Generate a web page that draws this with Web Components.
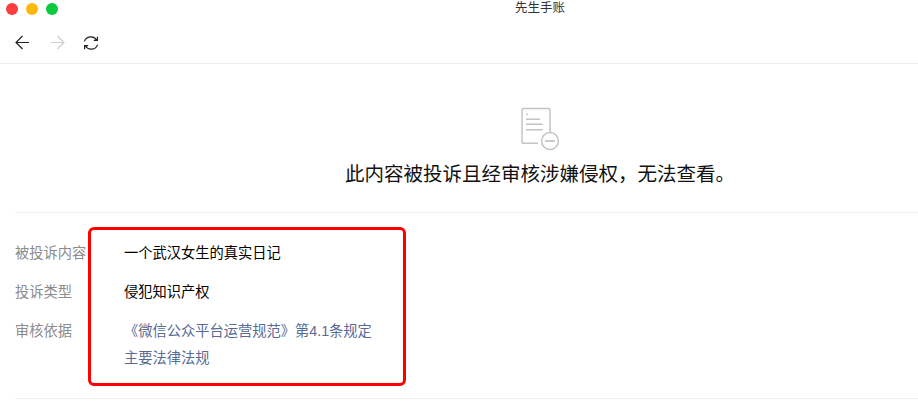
<!DOCTYPE html>
<html>
<head>
<meta charset="utf-8">
<style>
  html, body { margin: 0; padding: 0; background: #fff; }
  body { width: 918px; height: 410px; overflow: hidden; font-family: "Liberation Sans", "Noto Sans CJK SC", sans-serif; }
</style>
</head>
<body>
<app-window>
  <title-bar>先生手账</title-bar>
  <tool-bar></tool-bar>
  <notice-head>此内容被投诉且经审核涉嫌侵权，无法查看。</notice-head>
  <info-list>
    <info-row label="被投诉内容">一个武汉女生的真实日记</info-row>
    <info-row label="投诉类型">侵犯知识产权</info-row>
    <info-row label="审核依据" link>《微信公众平台运营规范》第4.1条规定</info-row>
    <info-row link tight>主要法律法规</info-row>
  </info-list>
  <mark-box></mark-box>
</app-window>

<script>
  class AppWindow extends HTMLElement {
    constructor() {
      super();
      const shadow = this.attachShadow({ mode: "open" });
      shadow.innerHTML = `
        <style>
          :host { display: block; position: relative; width: 918px; height: 410px; overflow: hidden; }
        </style>
        <slot></slot>`;
    }
  }

  class TitleBar extends HTMLElement {
    constructor() {
      super();
      const shadow = this.attachShadow({ mode: "open" });
      shadow.innerHTML = `
        <style>
          :host { display: flex; align-items: center; height: 17px; padding-left: 6px; position: relative; }
          .lights { display: flex; gap: 8px; }
          .lights i { width: 12px; height: 12px; border-radius: 50%; display: block; }
          .title { flex: 1; padding-left: 457px; font-size: 12.5px; line-height: 17px; color: #333; }
        </style>
        <div class="lights">
          <i style="background:#fc3d3f"></i>
          <i style="background:#fdb90b"></i>
          <i style="background:#0dc93f"></i>
        </div>
        <div class="title"><slot></slot></div>`;
    }
  }

  class ToolBar extends HTMLElement {
    constructor() {
      super();
      const shadow = this.attachShadow({ mode: "open" });
      shadow.innerHTML = `
        <style>
          :host { display: flex; align-items: center; gap: 18px; height: 40px; padding: 6px 0 0 15px; border-bottom: 1px solid #eee; box-sizing: content-box; }
          svg { display: block; width: 16px; height: 16px; fill: none; stroke-width: 1.2; }
        </style>
        <svg viewBox="0 0 16 16" stroke="#222"><path d="M14 7.5H1M7.5 1L1 7.5 7.5 14"/></svg>
        <svg viewBox="0 0 16 16" stroke="#ccc"><path d="M2 7.5h13M8.5 1L15 7.5 8.5 14"/></svg>
        <svg viewBox="0 0 16 16" stroke="#222"><path d="M1.4 6.4A6.8 6.8 0 0 1 13.6 5M14.6 9.6A6.8 6.8 0 0 1 2.4 11M14.4 1.8v3.6h-3.6M1.6 14.2v-3.6h3.6"/></svg>`;
    }
  }

  class NoticeHead extends HTMLElement {
    constructor() {
      super();
      const shadow = this.attachShadow({ mode: "open" });
      shadow.innerHTML = `
        <style>
          :host { display: flex; flex-direction: column; align-items: center; margin-left: 15px; padding: 43px 0 0 147px; height: 105px; border-bottom: 1px solid #eee; box-sizing: content-box; }
          svg { display: block; width: 40px; height: 44px; fill: none; stroke: #c4c4c4; stroke-width: 1.5; }
          h1 { margin: 9px 0 0; font-size: 19.5px; font-weight: 400; line-height: 28px; color: #111; white-space: nowrap; }
        </style>
        <svg viewBox="0 0 40 44">
          <path d="M18 36.3H3.5A1.5 1.5 0 0 1 2 34.8V3A1.5 1.5 0 0 1 3.5 1.5h25A1.5 1.5 0 0 1 30 3v22"/>
          <path d="M6 7.3h1.8M6 12.3h14M6 17.3h16.7M6 22.7h16.7"/>
          <circle cx="30" cy="34" r="8.4"/>
          <path d="M25 34h10" stroke-width="1.8"/>
        </svg>
        <h1><slot></slot></h1>`;
    }
  }

  class InfoList extends HTMLElement {
    constructor() {
      super();
      const shadow = this.attachShadow({ mode: "open" });
      shadow.innerHTML = `
        <style>
          :host { display: block; margin-left: 15px; padding-top: 21px; height: 164px; border-bottom: 1px solid #eee; box-sizing: content-box; }
        </style>
        <slot></slot>`;
    }
  }

  class InfoRow extends HTMLElement {
    constructor() {
      super();
      const shadow = this.attachShadow({ mode: "open" });
      shadow.innerHTML = `
        <style>
          :host { display: flex; font-size: 14.25px; line-height: 39px; color: #000; }
          :host([tight]) { line-height: 15px; }
          :host([link]) { color: #576b95; }
          .label { width: 109px; flex: none; color: #8c8c8c; white-space: nowrap; }
        </style>
        <div class="label"></div>
        <div><slot></slot></div>`;
      shadow.querySelector(".label").textContent = this.getAttribute("label") || "";
    }
  }

  // red annotation drawn over the screenshot
  class MarkBox extends HTMLElement {
    constructor() {
      super();
      const shadow = this.attachShadow({ mode: "open" });
      shadow.innerHTML = `
        <style>
          :host { display: block; position: absolute; left: 88px; top: 227px; width: 318px; height: 159px; box-sizing: border-box; border: 3px solid #f00; border-radius: 6px; }
        </style>`;
    }
  }

  customElements.define("app-window", AppWindow);
  customElements.define("title-bar", TitleBar);
  customElements.define("tool-bar", ToolBar);
  customElements.define("notice-head", NoticeHead);
  customElements.define("info-list", InfoList);
  customElements.define("info-row", InfoRow);
  customElements.define("mark-box", MarkBox);
</script>
</body>
</html>
